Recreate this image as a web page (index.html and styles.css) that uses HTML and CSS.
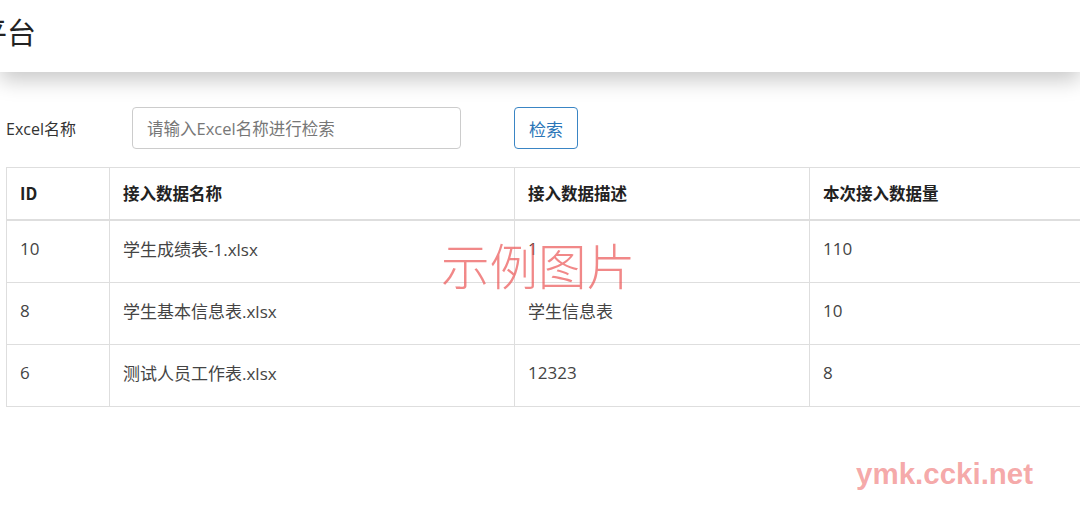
FILE: index.html
```html
<!DOCTYPE html>
<html lang="zh">
<head>
<meta charset="utf-8">
<title>平台</title>
<link rel="stylesheet" href="styles.css">
</head>
<body>
<header class="topbar">
  <h1 class="brand">平台</h1>
</header>
<main class="content">
  <form class="search">
    <label class="search-label" for="q">Excel名称</label>
    <input class="search-input" id="q" type="text" placeholder="请输入Excel名称进行检索">
    <button class="search-btn" type="button">检索</button>
  </form>
  <table class="grid">
    <colgroup>
      <col class="c-id"><col class="c-name"><col class="c-desc"><col class="c-count">
    </colgroup>
    <thead>
      <tr><th>ID</th><th>接入数据名称</th><th>接入数据描述</th><th>本次接入数据量</th></tr>
    </thead>
    <tbody>
      <tr><td>10</td><td>学生成绩表-1.xlsx</td><td>1</td><td>110</td></tr>
      <tr><td>8</td><td>学生基本信息表.xlsx</td><td>学生信息表</td><td>10</td></tr>
      <tr><td>6</td><td>测试人员工作表.xlsx</td><td>12323</td><td>8</td></tr>
    </tbody>
  </table>
</main>
<div class="wm wm-center">示例图片</div>
<div class="wm wm-site">ymk.ccki.net</div>
</body>
</html>
```

FILE: styles.css
```css
html, body {
  margin: 0;
  padding: 0;
  background: #fff;
  overflow: hidden;
  width: 1080px;
  height: 508px;
}
body {
  font-family: "Open Sans", "Noto Sans CJK SC", sans-serif;
  color: #333;
  position: relative;
}
.topbar {
  height: 72px;
  background: #fff;
  box-shadow: 0 8px 20px rgba(0, 0, 0, 0.22);
  position: relative;
  z-index: 1;
  display: flex;
  align-items: center;
  overflow: hidden;
}
.brand {
  margin: 0 0 0 -22px;
  font-family: "Noto Sans CJK SC", sans-serif;
  font-weight: 400;
  font-size: 29px;
  line-height: 1;
  color: #222;
  padding-bottom: 10px;
}
.content {
  padding: 35px 0 0 6px;
}
.search {
  display: flex;
  align-items: center;
  height: 42px;
  margin: 0 0 18px 0;
}
.search-label {
  width: 126px;
  font-size: 16px;
  color: #333;
}
.search-input {
  box-sizing: border-box;
  width: 329px;
  height: 42px;
  border: 1px solid #ccc;
  border-radius: 4px;
  padding: 0 14px;
  font-family: "Open Sans", "Noto Sans CJK SC", sans-serif;
  font-size: 16.5px;
  color: #333;
  margin-right: 53px;
}
.search-input::placeholder {
  color: #777;
}
.search-btn {
  box-sizing: border-box;
  width: 64px;
  height: 42px;
  border: 1px solid #3a85c4;
  border-radius: 4px;
  background: #fff;
  color: #2b76b8;
  font-family: "Noto Sans CJK SC", sans-serif;
  font-size: 17px;
  padding: 0;
}
.grid {
  border-collapse: collapse;
  table-layout: fixed;
  width: 1200px;
  font-size: 17px;
}
.c-id { width: 103px; }
.c-name { width: 405px; }
.c-desc { width: 295px; }
.c-count { width: 397px; }
.grid th, .grid td {
  border: 1px solid #dedede;
  text-align: left;
  padding: 0 13px;
  vertical-align: middle;
}
.grid th {
  height: 50px;
  font-family: "Noto Sans CJK SC", sans-serif;
  font-weight: 700;
  font-size: 16.5px;
  color: #222;
  border-bottom: 2px solid #dedede;
  padding-bottom: 1px;
}
.grid td {
  height: 55px;
  color: #444;
  padding-bottom: 6px;
}
.wm {
  position: absolute;
  pointer-events: none;
  white-space: nowrap;
}
.wm-center {
  left: 441px;
  top: 240px;
  font-family: "Noto Sans CJK SC", serif;
  font-weight: 300;
  font-size: 48.5px;
  line-height: 1;
  color: rgba(236, 90, 90, 0.72);
}
.wm-site {
  left: 856px;
  top: 459px;
  font-family: "Liberation Sans", Arial, sans-serif;
  font-weight: 700;
  font-size: 29.5px;
  line-height: 1;
  color: rgba(240, 120, 120, 0.65);
}
```
